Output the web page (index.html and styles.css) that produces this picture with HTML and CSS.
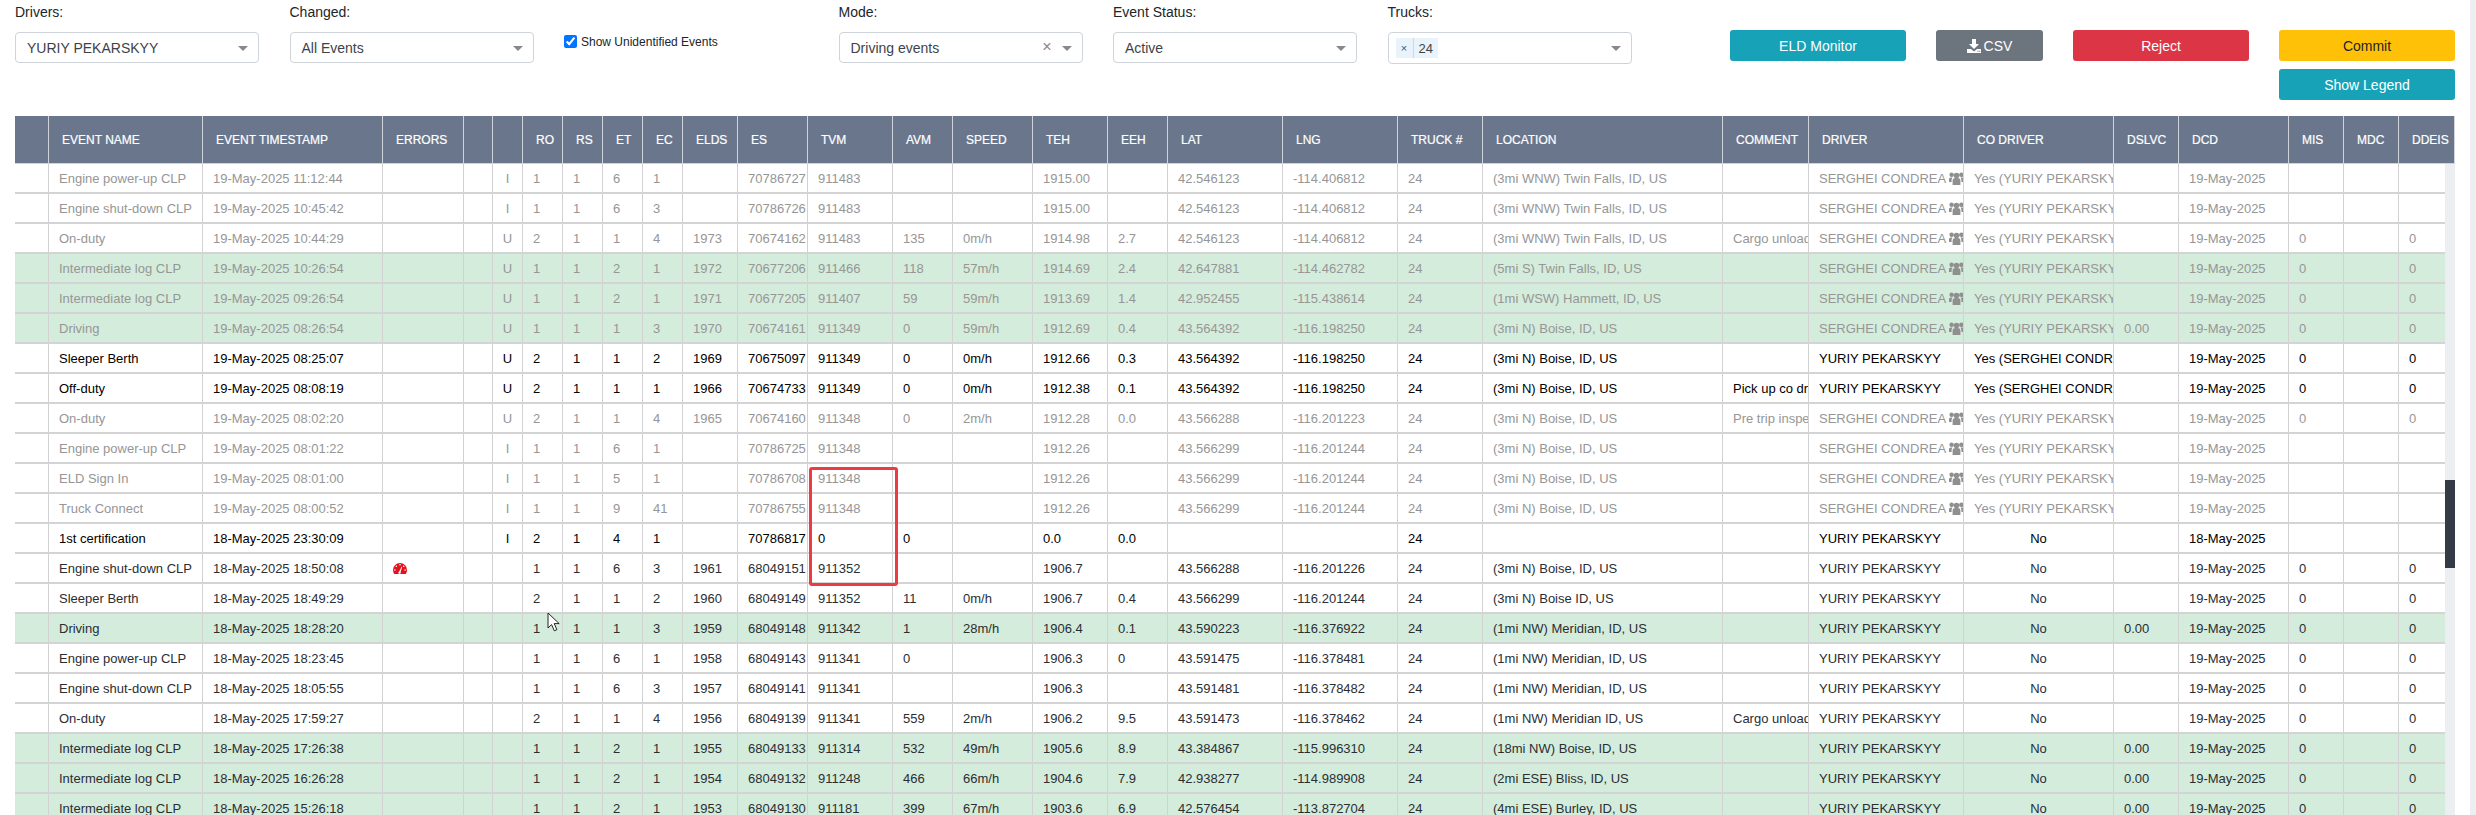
FILE: index.html
```html
<!DOCTYPE html>
<html lang="en">
<head>
<meta charset="utf-8">
<title>ELD Events</title>
<link rel="stylesheet" href="styles.css">
</head>
<body>
<svg class="defs" width="0" height="0" aria-hidden="true">
<symbol id="users" viewBox="0 0 15 13"><path d="M7.500 0.800a2.800 2.800 0 1 1 0 5.600a2.800 2.800 0 0 1 0-5.600zM2.600 0.600a2.200 2.200 0 1 1 0 4.400a2.200 2.200 0 0 1 0-4.400zM12.400 0.600a2.200 2.200 0 1 1 0 4.400a2.200 2.200 0 0 1 0-4.400zM3.600 13V8.400c0-1.400 1-2.400 2.400-2.400h3c1.400 0 2.400 1 2.400 2.400V13zM3.500 5.500C2.900 6.200 2.600 7.100 2.600 8v2H0V7.300C0 6.200.8 5.500 1.800 5.500zM11.500 5.500c.6.700.9 1.600.9 2.500v2H15V7.300c0-1.100-.8-1.800-1.800-1.800z"/></symbol>
</svg>
<div class="page">
  <main class="main">
    <section class="toolbar">
      <div class="filters">
        <div class="filter"><label class="flabel">Drivers:</label><div class="select"><span class="val">YURIY PEKARSKYY</span><i class="caret"></i></div></div>
        <div class="filter"><label class="flabel">Changed:</label><div class="select"><span class="val">All Events</span><i class="caret"></i></div></div>
        <div class="filter"><label class="check"><input type="checkbox" checked><span>Show Unidentified Events</span></label></div>
        <div class="filter"><label class="flabel">Mode:</label><div class="select"><span class="val">Driving events</span><span class="clear">×</span><i class="caret"></i></div></div>
        <div class="filter"><label class="flabel">Event Status:</label><div class="select"><span class="val">Active</span><i class="caret"></i></div></div>
        <div class="filter"><label class="flabel">Trucks:</label><div class="select tall"><span class="chip"><span class="chipx">×</span><span class="chipv">24</span></span><i class="caret"></i></div></div>
      </div>
      <div class="actions">
        <button class="btn info wide">ELD Monitor</button>
        <button class="btn gray csv"><svg class="dl" viewBox="0 0 14 14"><path d="M5 0h4v5h3L7 10 2 5h3zM0 10h4l3 2.400L10 10h4v4H0z"/><path fill="#6c757d" d="M10.500 11.800h1v1h-1zM12.200 11.800h1v1h-1z"/></svg>CSV</button>
        <button class="btn red wide">Reject</button>
        <div class="stack">
          <button class="btn yellow wide">Commit</button>
          <button class="btn info wide">Show Legend</button>
        </div>
      </div>
    </section>

    <section class="grid">
      <table class="thead">
        <colgroup><col class="c0"><col class="c1"><col class="c2"><col class="c3"><col class="c4"><col class="c5"><col class="c6"><col class="c6"><col class="c6"><col class="c6"><col class="c10"><col class="c11"><col class="c12"><col class="c13"><col class="c14"><col class="c15"><col class="c13"><col class="c17"><col class="c17"><col class="c12"><col class="c20"><col class="c21"><col class="c22"><col class="c23"><col class="c24"><col class="c25"><col class="c10"><col class="c10"><col class="c28"></colgroup>
        <tr><th></th><th>EVENT NAME</th><th>EVENT TIMESTAMP</th><th>ERRORS</th><th></th><th></th><th>RO</th><th>RS</th><th>ET</th><th>EC</th><th>ELDS</th><th>ES</th><th>TVM</th><th>AVM</th><th>SPEED</th><th>TEH</th><th>EEH</th><th>LAT</th><th>LNG</th><th>TRUCK #</th><th>LOCATION</th><th>COMMENT</th><th>DRIVER</th><th>CO DRIVER</th><th>DSLVC</th><th>DCD</th><th>MIS</th><th>MDC</th><th>DDEIS</th></tr>
      </table>
      <div class="bodywrap">
        <div class="clip">
          <table class="tbody">
            <colgroup><col class="c0"><col class="c1"><col class="c2"><col class="c3"><col class="c4"><col class="c5"><col class="c6"><col class="c6"><col class="c6"><col class="c6"><col class="c10"><col class="c11"><col class="c12"><col class="c13"><col class="c14"><col class="c15"><col class="c13"><col class="c17"><col class="c17"><col class="c12"><col class="c20"><col class="c21"><col class="c22"><col class="c23"><col class="c24"><col class="c25"><col class="c10"><col class="c10"><col class="c28"></colgroup>
            <tr class="mute"><td></td><td>Engine power-up CLP</td><td>19-May-2025 11:12:44</td><td></td><td></td><td class="ctr">I</td><td>1</td><td>1</td><td>6</td><td>1</td><td></td><td>70786727</td><td>911483</td><td></td><td></td><td>1915.00</td><td></td><td>42.546123</td><td>-114.406812</td><td>24</td><td>(3mi WNW) Twin Falls, ID, US</td><td></td><td>SERGHEI CONDREA<svg class="users"><use href="#users"/></svg></td><td>Yes (YURIY PEKARSKYY)</td><td></td><td>19-May-2025</td><td></td><td></td><td></td></tr>
            <tr class="mute"><td></td><td>Engine shut-down CLP</td><td>19-May-2025 10:45:42</td><td></td><td></td><td class="ctr">I</td><td>1</td><td>1</td><td>6</td><td>3</td><td></td><td>70786726</td><td>911483</td><td></td><td></td><td>1915.00</td><td></td><td>42.546123</td><td>-114.406812</td><td>24</td><td>(3mi WNW) Twin Falls, ID, US</td><td></td><td>SERGHEI CONDREA<svg class="users"><use href="#users"/></svg></td><td>Yes (YURIY PEKARSKYY)</td><td></td><td>19-May-2025</td><td></td><td></td><td></td></tr>
            <tr class="mute"><td></td><td>On-duty</td><td>19-May-2025 10:44:29</td><td></td><td></td><td class="ctr">U</td><td>2</td><td>1</td><td>1</td><td>4</td><td>1973</td><td>70674162</td><td>911483</td><td>135</td><td>0m/h</td><td>1914.98</td><td>2.7</td><td>42.546123</td><td>-114.406812</td><td>24</td><td>(3mi WNW) Twin Falls, ID, US</td><td>Cargo unloading</td><td>SERGHEI CONDREA<svg class="users"><use href="#users"/></svg></td><td>Yes (YURIY PEKARSKYY)</td><td></td><td>19-May-2025</td><td>0</td><td></td><td>0</td></tr>
            <tr class="mute green"><td></td><td>Intermediate log CLP</td><td>19-May-2025 10:26:54</td><td></td><td></td><td class="ctr">U</td><td>1</td><td>1</td><td>2</td><td>1</td><td>1972</td><td>70677206</td><td>911466</td><td>118</td><td>57m/h</td><td>1914.69</td><td>2.4</td><td>42.647881</td><td>-114.462782</td><td>24</td><td>(5mi S) Twin Falls, ID, US</td><td></td><td>SERGHEI CONDREA<svg class="users"><use href="#users"/></svg></td><td>Yes (YURIY PEKARSKYY)</td><td></td><td>19-May-2025</td><td>0</td><td></td><td>0</td></tr>
            <tr class="mute green"><td></td><td>Intermediate log CLP</td><td>19-May-2025 09:26:54</td><td></td><td></td><td class="ctr">U</td><td>1</td><td>1</td><td>2</td><td>1</td><td>1971</td><td>70677205</td><td>911407</td><td>59</td><td>59m/h</td><td>1913.69</td><td>1.4</td><td>42.952455</td><td>-115.438614</td><td>24</td><td>(1mi WSW) Hammett, ID, US</td><td></td><td>SERGHEI CONDREA<svg class="users"><use href="#users"/></svg></td><td>Yes (YURIY PEKARSKYY)</td><td></td><td>19-May-2025</td><td>0</td><td></td><td>0</td></tr>
            <tr class="mute green"><td></td><td>Driving</td><td>19-May-2025 08:26:54</td><td></td><td></td><td class="ctr">U</td><td>1</td><td>1</td><td>1</td><td>3</td><td>1970</td><td>70674161</td><td>911349</td><td>0</td><td>59m/h</td><td>1912.69</td><td>0.4</td><td>43.564392</td><td>-116.198250</td><td>24</td><td>(3mi N) Boise, ID, US</td><td></td><td>SERGHEI CONDREA<svg class="users"><use href="#users"/></svg></td><td>Yes (YURIY PEKARSKYY)</td><td>0.00</td><td>19-May-2025</td><td>0</td><td></td><td>0</td></tr>
            <tr class="black"><td></td><td>Sleeper Berth</td><td>19-May-2025 08:25:07</td><td></td><td></td><td class="ctr">U</td><td>2</td><td>1</td><td>1</td><td>2</td><td>1969</td><td>70675097</td><td>911349</td><td>0</td><td>0m/h</td><td>1912.66</td><td>0.3</td><td>43.564392</td><td>-116.198250</td><td>24</td><td>(3mi N) Boise, ID, US</td><td></td><td>YURIY PEKARSKYY</td><td>Yes (SERGHEI CONDREA)</td><td></td><td>19-May-2025</td><td>0</td><td></td><td>0</td></tr>
            <tr class="black"><td></td><td>Off-duty</td><td>19-May-2025 08:08:19</td><td></td><td></td><td class="ctr">U</td><td>2</td><td>1</td><td>1</td><td>1</td><td>1966</td><td>70674733</td><td>911349</td><td>0</td><td>0m/h</td><td>1912.38</td><td>0.1</td><td>43.564392</td><td>-116.198250</td><td>24</td><td>(3mi N) Boise, ID, US</td><td>Pick up co driver</td><td>YURIY PEKARSKYY</td><td>Yes (SERGHEI CONDREA)</td><td></td><td>19-May-2025</td><td>0</td><td></td><td>0</td></tr>
            <tr class="mute"><td></td><td>On-duty</td><td>19-May-2025 08:02:20</td><td></td><td></td><td class="ctr">U</td><td>2</td><td>1</td><td>1</td><td>4</td><td>1965</td><td>70674160</td><td>911348</td><td>0</td><td>2m/h</td><td>1912.28</td><td>0.0</td><td>43.566288</td><td>-116.201223</td><td>24</td><td>(3mi N) Boise, ID, US</td><td>Pre trip inspection</td><td>SERGHEI CONDREA<svg class="users"><use href="#users"/></svg></td><td>Yes (YURIY PEKARSKYY)</td><td></td><td>19-May-2025</td><td>0</td><td></td><td>0</td></tr>
            <tr class="mute"><td></td><td>Engine power-up CLP</td><td>19-May-2025 08:01:22</td><td></td><td></td><td class="ctr">I</td><td>1</td><td>1</td><td>6</td><td>1</td><td></td><td>70786725</td><td>911348</td><td></td><td></td><td>1912.26</td><td></td><td>43.566299</td><td>-116.201244</td><td>24</td><td>(3mi N) Boise, ID, US</td><td></td><td>SERGHEI CONDREA<svg class="users"><use href="#users"/></svg></td><td>Yes (YURIY PEKARSKYY)</td><td></td><td>19-May-2025</td><td></td><td></td><td></td></tr>
            <tr class="mute"><td></td><td>ELD Sign In</td><td>19-May-2025 08:01:00</td><td></td><td></td><td class="ctr">I</td><td>1</td><td>1</td><td>5</td><td>1</td><td></td><td>70786708</td><td>911348</td><td></td><td></td><td>1912.26</td><td></td><td>43.566299</td><td>-116.201244</td><td>24</td><td>(3mi N) Boise, ID, US</td><td></td><td>SERGHEI CONDREA<svg class="users"><use href="#users"/></svg></td><td>Yes (YURIY PEKARSKYY)</td><td></td><td>19-May-2025</td><td></td><td></td><td></td></tr>
            <tr class="mute"><td></td><td>Truck Connect</td><td>19-May-2025 08:00:52</td><td></td><td></td><td class="ctr">I</td><td>1</td><td>1</td><td>9</td><td>41</td><td></td><td>70786755</td><td>911348</td><td></td><td></td><td>1912.26</td><td></td><td>43.566299</td><td>-116.201244</td><td>24</td><td>(3mi N) Boise, ID, US</td><td></td><td>SERGHEI CONDREA<svg class="users"><use href="#users"/></svg></td><td>Yes (YURIY PEKARSKYY)</td><td></td><td>19-May-2025</td><td></td><td></td><td></td></tr>
            <tr class="black"><td></td><td>1st certification</td><td>18-May-2025 23:30:09</td><td></td><td></td><td class="ctr">I</td><td>2</td><td>1</td><td>4</td><td>1</td><td></td><td>70786817</td><td>0</td><td>0</td><td></td><td>0.0</td><td>0.0</td><td></td><td></td><td>24</td><td></td><td></td><td>YURIY PEKARSKYY</td><td class="ctr">No</td><td></td><td>18-May-2025</td><td></td><td></td><td></td></tr>
            <tr><td></td><td>Engine shut-down CLP</td><td>18-May-2025 18:50:08</td><td><svg class="gauge" viewBox="0 0 14 11"><path fill="#e8101c" d="M7 0a7 7 0 0 1 7 7c0 1.500-.4 2.800-1.200 4H1.200C.4 9.800 0 8.500 0 7a7 7 0 0 1 7-7z"/><g fill="#fff"><circle cx="7" cy="1.800" r=".8"/><circle cx="3.300" cy="3.300" r=".8"/><circle cx="10.700" cy="3.300" r=".8"/><circle cx="1.900" cy="7" r=".8"/><circle cx="12.100" cy="7" r=".8"/><path d="M6.200 8.400 8.600 3.800l.6.300L7.600 9a1.200 1.200 0 1 1-1.400-.6z"/></g></svg></td><td></td><td></td><td>1</td><td>1</td><td>6</td><td>3</td><td>1961</td><td>68049151</td><td>911352</td><td></td><td></td><td>1906.7</td><td></td><td>43.566288</td><td>-116.201226</td><td>24</td><td>(3mi N) Boise, ID, US</td><td></td><td>YURIY PEKARSKYY</td><td class="ctr">No</td><td></td><td>19-May-2025</td><td>0</td><td></td><td>0</td></tr>
            <tr><td></td><td>Sleeper Berth</td><td>18-May-2025 18:49:29</td><td></td><td></td><td></td><td>2</td><td>1</td><td>1</td><td>2</td><td>1960</td><td>68049149</td><td>911352</td><td>11</td><td>0m/h</td><td>1906.7</td><td>0.4</td><td>43.566299</td><td>-116.201244</td><td>24</td><td>(3mi N) Boise ID, US</td><td></td><td>YURIY PEKARSKYY</td><td class="ctr">No</td><td></td><td>19-May-2025</td><td>0</td><td></td><td>0</td></tr>
            <tr class="green"><td></td><td>Driving</td><td>18-May-2025 18:28:20</td><td></td><td></td><td></td><td>1</td><td>1</td><td>1</td><td>3</td><td>1959</td><td>68049148</td><td>911342</td><td>1</td><td>28m/h</td><td>1906.4</td><td>0.1</td><td>43.590223</td><td>-116.376922</td><td>24</td><td>(1mi NW) Meridian, ID, US</td><td></td><td>YURIY PEKARSKYY</td><td class="ctr">No</td><td>0.00</td><td>19-May-2025</td><td>0</td><td></td><td>0</td></tr>
            <tr><td></td><td>Engine power-up CLP</td><td>18-May-2025 18:23:45</td><td></td><td></td><td></td><td>1</td><td>1</td><td>6</td><td>1</td><td>1958</td><td>68049143</td><td>911341</td><td>0</td><td></td><td>1906.3</td><td>0</td><td>43.591475</td><td>-116.378481</td><td>24</td><td>(1mi NW) Meridian, ID, US</td><td></td><td>YURIY PEKARSKYY</td><td class="ctr">No</td><td></td><td>19-May-2025</td><td>0</td><td></td><td>0</td></tr>
            <tr><td></td><td>Engine shut-down CLP</td><td>18-May-2025 18:05:55</td><td></td><td></td><td></td><td>1</td><td>1</td><td>6</td><td>3</td><td>1957</td><td>68049141</td><td>911341</td><td></td><td></td><td>1906.3</td><td></td><td>43.591481</td><td>-116.378482</td><td>24</td><td>(1mi NW) Meridian, ID, US</td><td></td><td>YURIY PEKARSKYY</td><td class="ctr">No</td><td></td><td>19-May-2025</td><td>0</td><td></td><td>0</td></tr>
            <tr><td></td><td>On-duty</td><td>18-May-2025 17:59:27</td><td></td><td></td><td></td><td>2</td><td>1</td><td>1</td><td>4</td><td>1956</td><td>68049139</td><td>911341</td><td>559</td><td>2m/h</td><td>1906.2</td><td>9.5</td><td>43.591473</td><td>-116.378462</td><td>24</td><td>(1mi NW) Meridian ID, US</td><td>Cargo unloading</td><td>YURIY PEKARSKYY</td><td class="ctr">No</td><td></td><td>19-May-2025</td><td>0</td><td></td><td>0</td></tr>
            <tr class="green"><td></td><td>Intermediate log CLP</td><td>18-May-2025 17:26:38</td><td></td><td></td><td></td><td>1</td><td>1</td><td>2</td><td>1</td><td>1955</td><td>68049133</td><td>911314</td><td>532</td><td>49m/h</td><td>1905.6</td><td>8.9</td><td>43.384867</td><td>-115.996310</td><td>24</td><td>(18mi NW) Boise, ID, US</td><td></td><td>YURIY PEKARSKYY</td><td class="ctr">No</td><td>0.00</td><td>19-May-2025</td><td>0</td><td></td><td>0</td></tr>
            <tr class="green"><td></td><td>Intermediate log CLP</td><td>18-May-2025 16:26:28</td><td></td><td></td><td></td><td>1</td><td>1</td><td>2</td><td>1</td><td>1954</td><td>68049132</td><td>911248</td><td>466</td><td>66m/h</td><td>1904.6</td><td>7.9</td><td>42.938277</td><td>-114.989908</td><td>24</td><td>(2mi ESE) Bliss, ID, US</td><td></td><td>YURIY PEKARSKYY</td><td class="ctr">No</td><td>0.00</td><td>19-May-2025</td><td>0</td><td></td><td>0</td></tr>
            <tr class="green"><td></td><td>Intermediate log CLP</td><td>18-May-2025 15:26:18</td><td></td><td></td><td></td><td>1</td><td>1</td><td>2</td><td>1</td><td>1953</td><td>68049130</td><td>911181</td><td>399</td><td>67m/h</td><td>1903.6</td><td>6.9</td><td>42.576454</td><td>-113.872704</td><td>24</td><td>(4mi ESE) Burley, ID, US</td><td></td><td>YURIY PEKARSKYY</td><td class="ctr">No</td><td>0.00</td><td>19-May-2025</td><td>0</td><td></td><td>0</td></tr>
          </table>
        </div>
        <div class="vbar"><div class="thumb"></div></div>
      </div>
    </section>
  </main>
  <div class="pagebar"></div>
  <div class="redbox"></div>
  <svg class="cursor" viewBox="0 0 13 20"><path d="M1 1v15l3.600-3.400 2.700 6.200 2.600-1.100-2.700-6.100h5z" fill="#fff" stroke="#222" stroke-width="1"/></svg>
</div>
</body>
</html>
```
FILE: styles.css
```css
* { box-sizing: border-box; }
html, body { margin: 0; height: 815px; overflow: hidden; background: #fff; }
body { font-family: "Liberation Sans", Arial, sans-serif; font-size: 13px; color: #212529; }
.defs { position: absolute; }
.page { position: relative; display: flex; height: 815px; }
.main { flex: 1; min-width: 0; padding: 0 15px; }
.pagebar { width: 6px; background: #eceef2; }

.toolbar { display: flex; justify-content: space-between; height: 116px; }
.filters { display: flex; gap: 30.5px; }
.filter { width: 244px; }
.flabel { display: block; height: 32px; padding-top: 4px; font-size: 14px; line-height: 16px; color: #212529; }
.select { position: relative; display: flex; align-items: center; height: 31px; padding: 0 11px; border: 1px solid #ced4da; border-radius: 4px; font-size: 14px; color: #3d4349; background: #fff; }
.select.tall { height: 32px; padding: 0 7px; }
.val { flex: 1; }
.caret { position: absolute; right: 10px; top: 13px; border: 5px solid transparent; border-top-color: #888; border-bottom: 0; }
.clear { position: absolute; right: 30px; top: 5px; color: #888; font-size: 16px; line-height: 18px; }
.chip { display: flex; align-items: center; height: 20px; background: #e8f3fc; font-size: 13px; }
.chipx { width: 18px; text-align: center; font-size: 11px; border-right: 1px solid #c5dcf0; height: 20px; line-height: 20px; color: #555; }
.chipv { padding: 0 5px; color: #3d4349; }
.check { display: flex; align-items: flex-start; height: 60px; padding-top: 35px; font-size: 12px; }
.check input { width: 13px; height: 13px; margin: 0 4px 0 0; }

.actions { display: flex; align-items: flex-start; gap: 30px; padding-top: 30px; }
.btn { display: block; height: 31px; border: 0; border-radius: 3px; font: 14px "Liberation Sans", Arial, sans-serif; color: #fff; padding: 0; }
.wide { width: 176px; }
.csv { display: flex; align-items: center; justify-content: center; width: 107px; }
.dl { width: 14px; height: 14px; fill: #fff; margin-right: 3px; }
.info { background: #17a2b8; }
.gray { background: #6c757d; }
.red { background: #dc3545; }
.yellow { background: #ffc107; color: #212529; }
.stack { display: flex; flex-direction: column; gap: 8px; }

table { border-collapse: separate; border-spacing: 0; table-layout: fixed; width: 2440px; }
.c0 { width: 34px; } .c1 { width: 154px; } .c2 { width: 180px; } .c3 { width: 81px; } .c4 { width: 29px; } .c5 { width: 30px; } .c6 { width: 40px; }
.c10 { width: 55px; } .c11 { width: 70px; } .c12 { width: 85px; } .c13 { width: 60px; } .c14 { width: 80px; } .c15 { width: 75px; }
.c17 { width: 115px; } .c20 { width: 240px; } .c21 { width: 86px; } .c22 { width: 155px; } .c23 { width: 150px; } .c24 { width: 65px; } .c25 { width: 110px; } .c28 { width: 56px; }

th { height: 48px; padding: 0 0 0 13px; background: #6a768c; color: #fff; font-size: 12px; font-weight: 400; -webkit-text-stroke: 0.2px #fff; text-align: left; white-space: nowrap; overflow: hidden; border-right: 1px solid #cfd3da; border-bottom: 1px solid #cfd3da; }
.bodywrap { display: flex; height: 651px; }
.clip { width: 2430px; overflow: hidden; flex: none; }
.vbar { width: 10px; background: #eceef2; padding-top: 316px; }
.thumb { height: 88px; background: #343a46; }

td { height: 30px; padding: 0 0 0 10px; font-size: 13px; white-space: nowrap; overflow: hidden; vertical-align: middle; border-right: 1px solid #d2d2d2; border-bottom: 2px solid #d4d4d4; color: #2a2e33; }
td.ctr { padding: 0; text-align: center; }
tr.green td { background: #d4ecdb; }
tr.mute td { color: #969696; }
tr.black td { color: #000; }
.users { display: inline-block; width: 15px; height: 13px; margin-left: 3px; vertical-align: -2px; fill: #8f8f8f; }
.gauge { display: block; width: 14px; height: 11px; }

.redbox { position: absolute; left: 809px; top: 467px; width: 89px; height: 119px; border: 3px solid #ee3a42; border-radius: 3px; }
.cursor { position: absolute; left: 547px; top: 612px; width: 13px; height: 20px; }
```
